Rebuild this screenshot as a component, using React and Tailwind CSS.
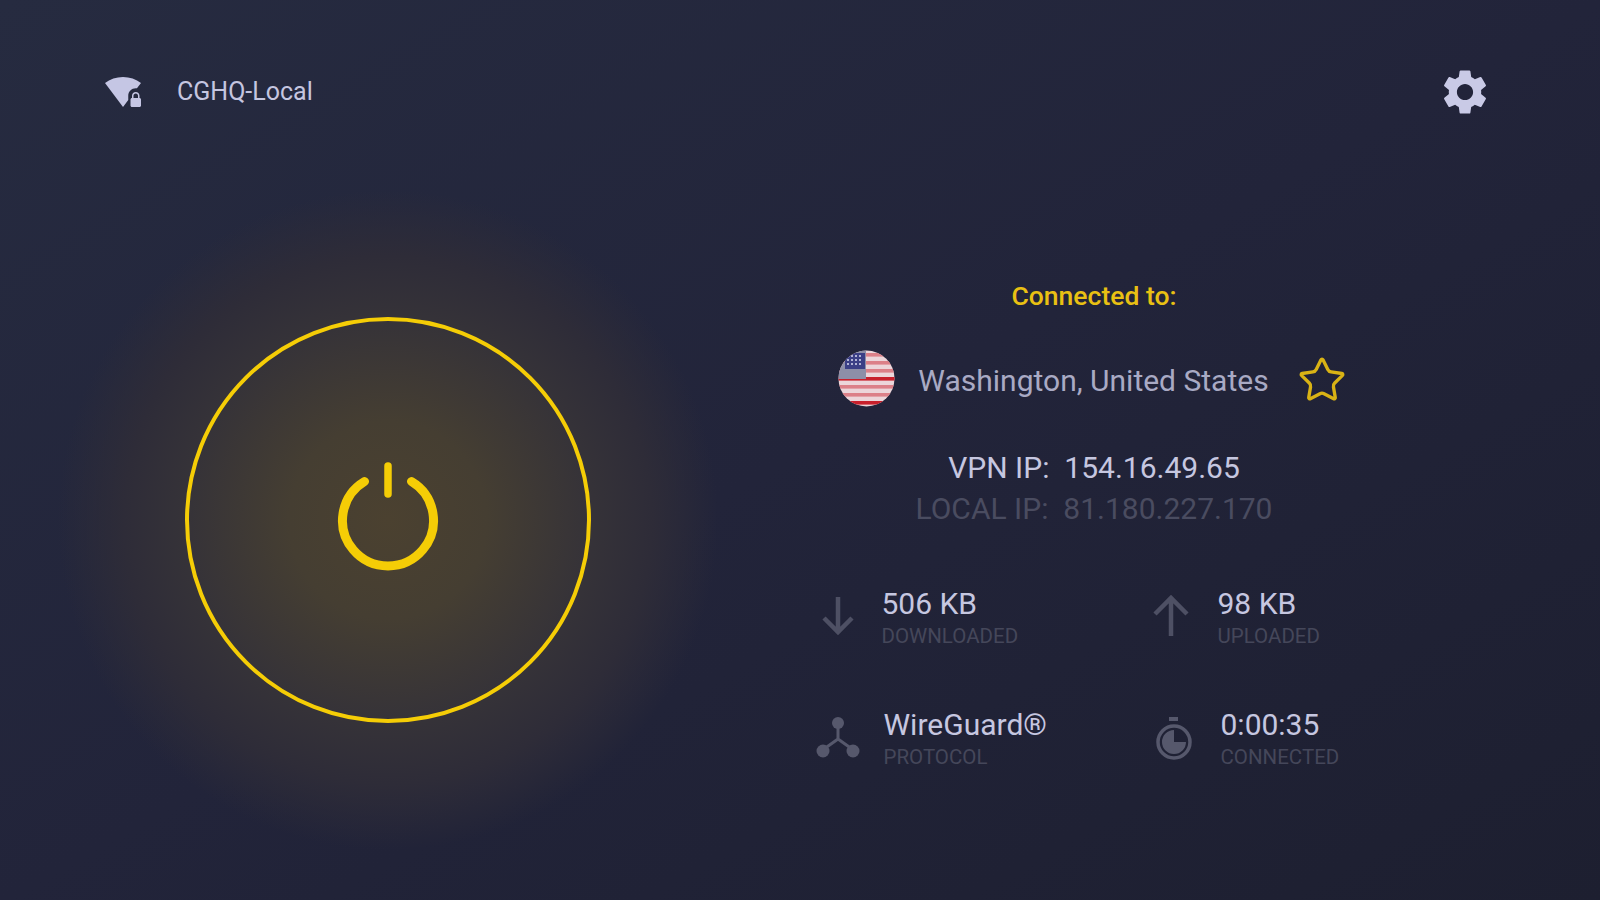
import { Star } from 'lucide-react';

function WifiLockIcon() {
    return (
        <svg viewBox="0 0 24 24" className="w-[36px] h-[36px] fill-[#c5c6e4]">
            <path d="M20.5 9.5c.28 0 .55.04.81.08L24 6c-3.34-2.51-7.5-4-12-4S3.34 3.49 0 6l12 16 3.5-4.67V14.5c0-2.76 2.24-5 5-5zM23 16v-1.5c0-1.38-1.12-2.5-2.5-2.5S18 13.12 18 14.5V16c-.55 0-1 .45-1 1v4c0 .55.45 1 1 1h5c.55 0 1-.45 1-1v-4c0-.55-.45-1-1-1zm-1 0h-3v-1.5c0-.83.67-1.5 1.5-1.5s1.5.67 1.5 1.5V16z" />
        </svg>
    );
}

function GearIcon() {
    return (
        <svg viewBox="0 0 24 24" className="w-[54px] h-[54px] fill-[#c9cae6]">
            <path d="M19.14 12.94c.04-.3.06-.61.06-.94 0-.32-.02-.64-.07-.94l2.03-1.58c.18-.14.23-.41.12-.61l-1.92-3.32c-.12-.22-.37-.29-.59-.22l-2.39.96c-.5-.38-1.03-.7-1.62-.94l-.36-2.54c-.04-.24-.24-.41-.48-.41h-3.84c-.24 0-.43.17-.47.41l-.36 2.54c-.59.24-1.13.57-1.62.94l-2.39-.96c-.22-.08-.47 0-.59.22L2.74 8.87c-.12.21-.08.47.12.61l2.03 1.58c-.05.3-.09.63-.09.94s.02.64.07.94l-2.03 1.58c-.18.14-.23.41-.12.61l1.92 3.32c.12.22.37.29.59.22l2.39-.96c.5.38 1.03.7 1.62.94l.36 2.54c.05.24.24.41.48.41h3.84c.24 0 .44-.17.47-.41l.36-2.54c.59-.24 1.13-.56 1.62-.94l2.39.96c.22.08.47 0 .59-.22l1.92-3.32c.12-.22.07-.47-.12-.61l-2.01-1.58zM12 15.6c-1.98 0-3.6-1.62-3.6-3.6s1.62-3.6 3.6-3.6 3.6 1.62 3.6 3.6-1.62 3.6-3.6 3.6z" />
        </svg>
    );
}

function PowerIcon() {
    return (
        <svg viewBox="0 0 120 120" className="w-[120px] h-[120px] fill-none stroke-[#f5cd06]" strokeLinecap="round">
            <path d="M36.5 21.5A45.5 45.5 0 1 0 83.5 21.5" strokeWidth="9" />
            <path d="M60 6V34" strokeWidth="7.5" />
        </svg>
    );
}

function UsFlag() {
    const stripes = [0, 1, 2, 3, 4, 5, 6];
    return (
        <svg viewBox="0 0 57 57" className="w-[57px] h-[57px] mb-[3px]">
            <defs>
                <clipPath id="flagClip"><circle cx="28.5" cy="28.5" r="28" /></clipPath>
            </defs>
            <g clipPath="url(#flagClip)">
                <rect width="57" height="57" fill="#ecd6da" />
                {stripes.map((i) => (
                    <rect key={i} x="0" y={3 + i * 8} width="57" height="3.6" fill={i === 3 || i === 6 ? '#c8202c' : '#dc8088'} />
                ))}
                <rect width="28" height="29" fill="#8d8fa8" />
                <rect x="7" y="3" width="20" height="16" fill="#3b3f86" />
                <path d="M9 6h16M9 10h16M9 14h16" stroke="#d9daf0" strokeWidth="1.6" strokeDasharray="2 2" />
            </g>
        </svg>
    );
}

function ArrowIcon({ up }) {
    return (
        <svg viewBox="0 0 40 44" className="w-[40px] h-[44px] fill-none stroke-[#4e5064]" strokeWidth="4.5">
            <path d={up ? 'M20 42V4M4 20L20 4L36 20' : 'M20 3V38M6 24L20 38L34 24'} />
        </svg>
    );
}

function HubIcon() {
    return (
        <svg viewBox="0 0 44 44" className="w-[44px] h-[44px] fill-[#56586c] stroke-[#56586c]">
            <path d="M22 9V23M22 23L8 33M22 23L36 33" strokeWidth="3" fill="none" />
            <circle cx="22" cy="7" r="6" stroke="none" />
            <circle cx="7" cy="35" r="6.5" stroke="none" />
            <circle cx="37" cy="35" r="6.5" stroke="none" />
        </svg>
    );
}

function TimerIcon() {
    return (
        <svg viewBox="0 0 40 44" className="w-[40px] h-[44px] fill-none">
            <rect x="15" y="0" width="9" height="4" fill="#56586c" />
            <circle cx="20" cy="25" r="16" stroke="#56586c" strokeWidth="3.5" />
            <path d="M20 13A12 12 0 1 0 32 25H20Z" fill="#56586c" />
        </svg>
    );
}

function Stat({ icon, value, label, iconClass }) {
    return (
        <div className="flex items-start">
            <div className={iconClass}>{icon}</div>
            <div className="flex flex-col">
                <span className="text-[30px] leading-[34px] text-[#c6c7e0]">{value}</span>
                <span className="text-[20.5px] leading-[30px] text-[#45475a] uppercase">{label}</span>
            </div>
        </div>
    );
}

function App() {
    return (
        <div className="flex flex-col w-full h-screen overflow-hidden font-['Roboto',sans-serif] bg-gradient-to-br from-[#262b40] via-[#22243a] to-[#1d1f30]">
            {/* Top bar */}
            <div className="flex items-center justify-between h-[184px] pl-[105px] pr-[108px]">
                <div className="flex items-center gap-[36px]">
                    <WifiLockIcon />
                    <span className="text-[25px] text-[#c5c6e0]">CGHQ-Local</span>
                </div>
                <GearIcon />
            </div>

            <div className="flex flex-1">
                {/* Power button + glow */}
                <div className="flex justify-center w-[776px]">
                    <div className="flex items-center justify-center w-[660px] h-[660px] mt-[6px] shrink-0 rounded-full bg-[radial-gradient(circle_closest-side,#4b4130_0%,#453e32_30%,#363338_60%,#2e2c38_80%,#23253a00_100%)]">
                        <div className="flex items-center justify-center w-[406px] h-[406px] rounded-full border-[4px] border-[#f5cd06]">
                            <PowerIcon />
                        </div>
                    </div>
                </div>

                {/* Connection details */}
                <div className="flex flex-col items-center w-[636px] pt-[95px]">
                    <span className="text-[26.5px] leading-[34px] font-medium text-[#e9c013]">Connected to:</span>
                    <div className="flex items-center mt-[37px] ml-[-3px]">
                        <UsFlag />
                        <span className="ml-[23px] text-[30px] text-[#a9aac4]">Washington, United States</span>
                        <Star className="ml-[28px] w-[50px] h-[50px] text-[#d9b315]" strokeWidth={1.6} />
                    </div>
                    <div className="mt-[37px] text-[30px] leading-[41px] text-[#c6c7e0] whitespace-pre">VPN IP:  154.16.49.65</div>
                    <div className="text-[30px] leading-[41px] text-[#4a4c60] whitespace-pre">LOCAL IP:  81.180.227.170</div>

                    <div className="grid grid-cols-[335px_1fr] gap-y-[57px] w-[560px] mt-[58px] ml-[3px]">
                        <Stat icon={<ArrowIcon />} value="506 KB" label="Downloaded" iconClass="w-[66px] pt-[7px] pl-[2px]" />
                        <Stat icon={<ArrowIcon up />} value="98 KB" label="Uploaded" iconClass="w-[67px] pt-[7px]" />
                        <Stat icon={<HubIcon />} value="WireGuard®" label="Protocol" iconClass="w-[68px] pt-[8px]" />
                        <Stat icon={<TimerIcon />} value="0:00:35" label="Connected" iconClass="w-[70px] pt-[9px] pl-[3px]" />
                    </div>
                </div>
            </div>
        </div>
    );
}

export default App;
